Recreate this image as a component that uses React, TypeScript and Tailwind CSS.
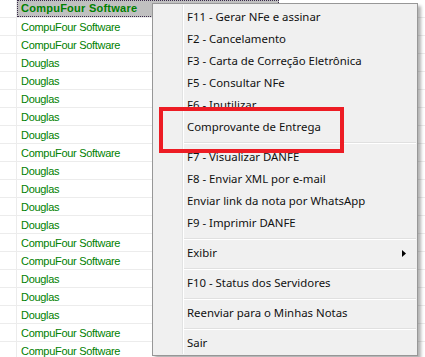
import React from "react";

const rows: string[] = [
  "CompuFour Software",
  "CompuFour Software",
  "CompuFour Software",
  "Douglas",
  "Douglas",
  "Douglas",
  "Douglas",
  "Douglas",
  "CompuFour Software",
  "Douglas",
  "Douglas",
  "Douglas",
  "Douglas",
  "CompuFour Software",
  "CompuFour Software",
  "Douglas",
  "Douglas",
  "Douglas",
  "CompuFour Software",
  "CompuFour Software",
];

type Entry = { label: string; sub?: boolean } | "sep";

const menu: Entry[] = [
  { label: "F11 - Gerar NFe e assinar" },
  { label: "F2 - Cancelamento" },
  { label: "F3 - Carta de Correção Eletrônica" },
  { label: "F5 - Consultar NFe" },
  { label: "F6 - Inutilizar" },
  { label: "Comprovante de Entrega" },
  "sep",
  { label: "F7 - Visualizar DANFE" },
  { label: "F8 - Enviar XML por e-mail" },
  { label: "Enviar link da nota por WhatsApp" },
  { label: "F9 - Imprimir DANFE" },
  "sep",
  { label: "Exibir", sub: true },
  "sep",
  { label: "F10 - Status dos Servidores" },
  "sep",
  { label: "Reenviar para o Minhas Notas" },
  "sep",
  { label: "Sair" },
];

export default function App() {
  return (
    <div className="relative w-[425px] h-[357px] overflow-hidden bg-white">
      {/* grid */}
      <div className="flex flex-col">
        {rows.map((r, i) => (
          <div key={i} className="flex h-[18px] shrink-0 border-b border-[#ececec]">
            <div className="w-[17px] shrink-0 border-r border-[#ececec]" />
            {i === 0 ? (
              <div className="w-[262px] h-[17px] -mb-px bg-[#c0c0c0] border border-dotted border-[#3a2a4a] flex items-center pl-[3px] text-[11px] font-bold tracking-[0.25px] text-[#008000] [font-family:'Liberation_Sans',Arial,sans-serif]">
                {r}
              </div>
            ) : (
              <div className="w-[262px] flex items-center pl-[4px] pt-px text-[11px] tracking-[-0.3px] text-[#008000] [font-family:'Liberation_Sans',Arial,sans-serif]">
                {r}
              </div>
            )}
          </div>
        ))}
      </div>

      {/* context menu */}
      <div className="absolute left-[152px] top-[3px] w-[266px] h-[353px] bg-[#f0f0f0] border border-[#979797] shadow-[3px_3px_3px_rgba(0,0,0,0.3)] pt-[2px] [font-family:'Noto_Sans',sans-serif]">
        <div className="absolute left-[29px] top-px bottom-px w-px bg-[#e2e3e3]" />
        <div className="absolute left-[30px] top-px bottom-px w-px bg-white" />
        <div className="relative flex flex-col">
          {menu.map((m, i) =>
            m === "sep" ? (
              <div key={i} className="h-[8px] pt-[4px]">
                <div className="h-px bg-[#e0e0e0] ml-[31px] mr-px" />
                <div className="h-px bg-white ml-[31px] mr-px" />
              </div>
            ) : (
              <div key={i} className="h-[22px] flex items-center pl-[34px] pr-[10px] text-[11.4px] text-[#111]">
                <span className="flex-1 whitespace-nowrap">{m.label}</span>
                {m.sub && (
                  <svg width="4" height="7" viewBox="0 0 4 7" className="mr-[1px]">
                    <polygon points="0,0 4,3.5 0,7" fill="#000" />
                  </svg>
                )}
              </div>
            )
          )}
        </div>
      </div>

      {/* red highlight */}
      <div className="absolute left-[159px] top-[107px] w-[185px] h-[46px] border-4 border-[#ed1c24]" />
    </div>
  );
}
